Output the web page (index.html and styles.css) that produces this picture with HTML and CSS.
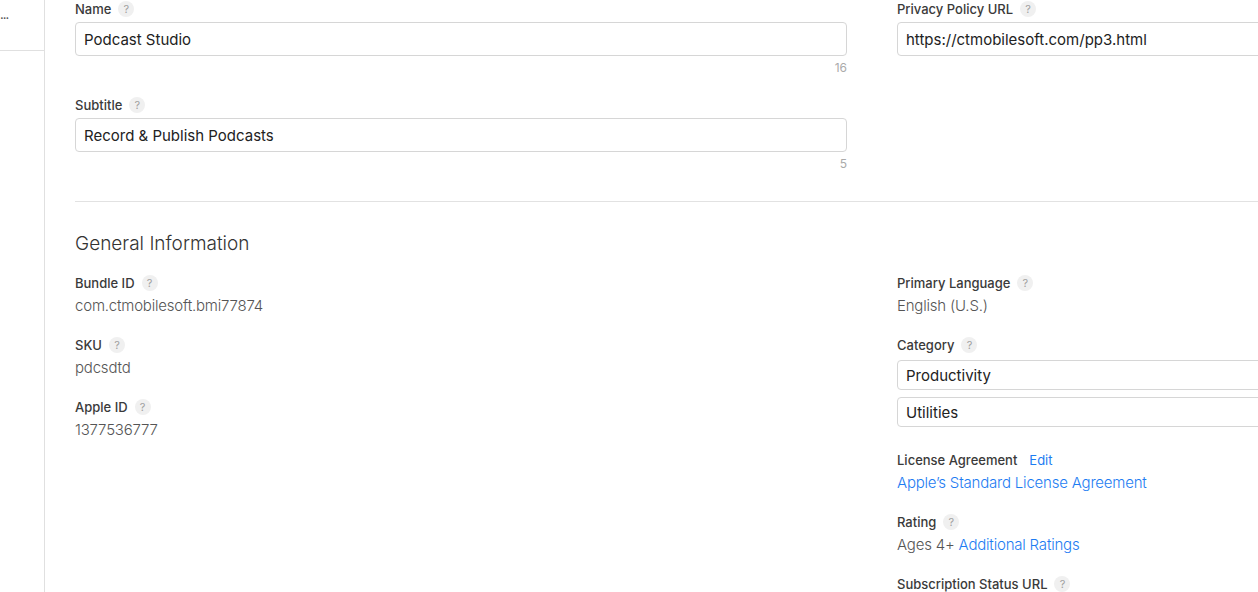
FILE: index.html
```html
<html lang="en">
  <head>
    <meta charset="UTF-8" />
    <meta name="viewport" content="width=device-width, initial-scale=1.0" />
    <title>App Information</title>
    <link rel="stylesheet" href="styles.css">
  </head>
  <body>
    <div class="app">
      <div class="sidebar">
        <div class="sideItem">...</div>
      </div>

      <div class="main">
        <div class="cols">
          <div class="col">
            <div class="field">
              <div class="label">Name <span class="help">?</span></div>
              <div class="input">Podcast Studio</div>
              <div class="count">16</div>
            </div>
            <div class="field">
              <div class="label">Subtitle <span class="help">?</span></div>
              <div class="input">Record &amp; Publish Podcasts</div>
              <div class="count">5</div>
            </div>
          </div>
          <div class="col">
            <div class="field">
              <div class="label">Privacy Policy URL <span class="help">?</span></div>
              <div class="input">https://ctmobilesoft.com/pp3.html</div>
            </div>
          </div>
        </div>

        <div class="divider"></div>

        <h2 class="sectionTitle">General Information</h2>

        <div class="cols">
          <div class="col">
            <div class="info">
              <div class="label">Bundle ID <span class="help">?</span></div>
              <div class="value">com.ctmobilesoft.bmi77874</div>
            </div>
            <div class="info">
              <div class="label">SKU <span class="help">?</span></div>
              <div class="value">pdcsdtd</div>
            </div>
            <div class="info">
              <div class="label">Apple ID <span class="help">?</span></div>
              <div class="value">1377536777</div>
            </div>
          </div>
          <div class="col">
            <div class="info">
              <div class="label">Primary Language <span class="help">?</span></div>
              <div class="value">English (U.S.)</div>
            </div>
            <div class="info category">
              <div class="label">Category <span class="help">?</span></div>
              <div class="select">Productivity</div>
              <div class="select">Utilities</div>
            </div>
            <div class="info">
              <div class="label">License Agreement <a class="edit">Edit</a></div>
              <div class="value"><a class="link">Apple’s Standard License Agreement</a></div>
            </div>
            <div class="info">
              <div class="label">Rating <span class="help">?</span></div>
              <div class="value">Ages 4+ <a class="link">Additional Ratings</a></div>
            </div>
            <div class="info">
              <div class="label">Subscription Status URL <span class="help">?</span></div>
            </div>
          </div>
        </div>
      </div>
    </div>
  </body>
</html>
```

FILE: styles.css
```css
* {
  margin: 0;
  padding: 0;
  box-sizing: border-box;
}
body {
  font-family: "Inter", "Liberation Sans", sans-serif;
  color: #333333;
  background: #ffffff;
  overflow: hidden;
}
.app {
  display: flex;
  height: 592px;
}
.sidebar {
  width: 45px;
  flex-shrink: 0;
  border-right: 1px solid #e0e0e0;
}
.sideItem {
  height: 51px;
  border-bottom: 1px solid #e0e0e0;
  font-size: 13px;
  line-height: 28px;
  color: #555555;
  letter-spacing: -1px;
}
.main {
  padding-left: 30px;
  padding-top: 1px;
}
.cols {
  display: grid;
  grid-template-columns: 772px 772px;
  column-gap: 50px;
}
.label {
  font-size: 13px;
  line-height: 16px;
  font-weight: 500;
  color: #3a3a3a;
  display: flex;
  align-items: center;
}
.help {
  display: inline-block;
  width: 16px;
  height: 16px;
  border-radius: 50%;
  background: #f0f0f0;
  color: #a0a0a0;
  font-size: 11px;
  line-height: 16px;
  text-align: center;
  font-weight: 400;
  margin-left: 7px;
}
.field {
  margin-bottom: 22px;
}
.input {
  margin-top: 5px;
  height: 34px;
  border: 1px solid #d6d6d6;
  border-radius: 4px;
  padding: 3px 8px 0;
  font-size: 15px;
  line-height: 28px;
  color: #222222;
}
.count {
  text-align: right;
  font-size: 12px;
  line-height: 14px;
  margin-top: 5px;
  color: #aaaaaa;
}
.divider {
  height: 1px;
  background: #e2e2e2;
  margin-top: 8px;
  width: 1300px;
}
.sectionTitle {
  font-size: 19px;
  line-height: 24px;
  font-weight: 300;
  color: #333333;
  margin-top: 30px;
  margin-bottom: 19px;
}
.info {
  margin-bottom: 21px;
}
.info.category {
  margin-bottom: 25px;
}
.value {
  margin-top: 5px;
  font-size: 15px;
  line-height: 20px;
  font-weight: 300;
  color: #555555;
  letter-spacing: -0.2px;
}
.select {
  margin-top: 7px;
  height: 30px;
  border: 1px solid #d6d6d6;
  border-radius: 4px;
  padding: 1px 8px 0;
  font-size: 15px;
  line-height: 27px;
  color: #222222;
}
.edit {
  color: #1d7cf2;
  font-weight: 400;
  margin-left: 12px;
}
.link {
  color: #1d7cf2;
}
```
